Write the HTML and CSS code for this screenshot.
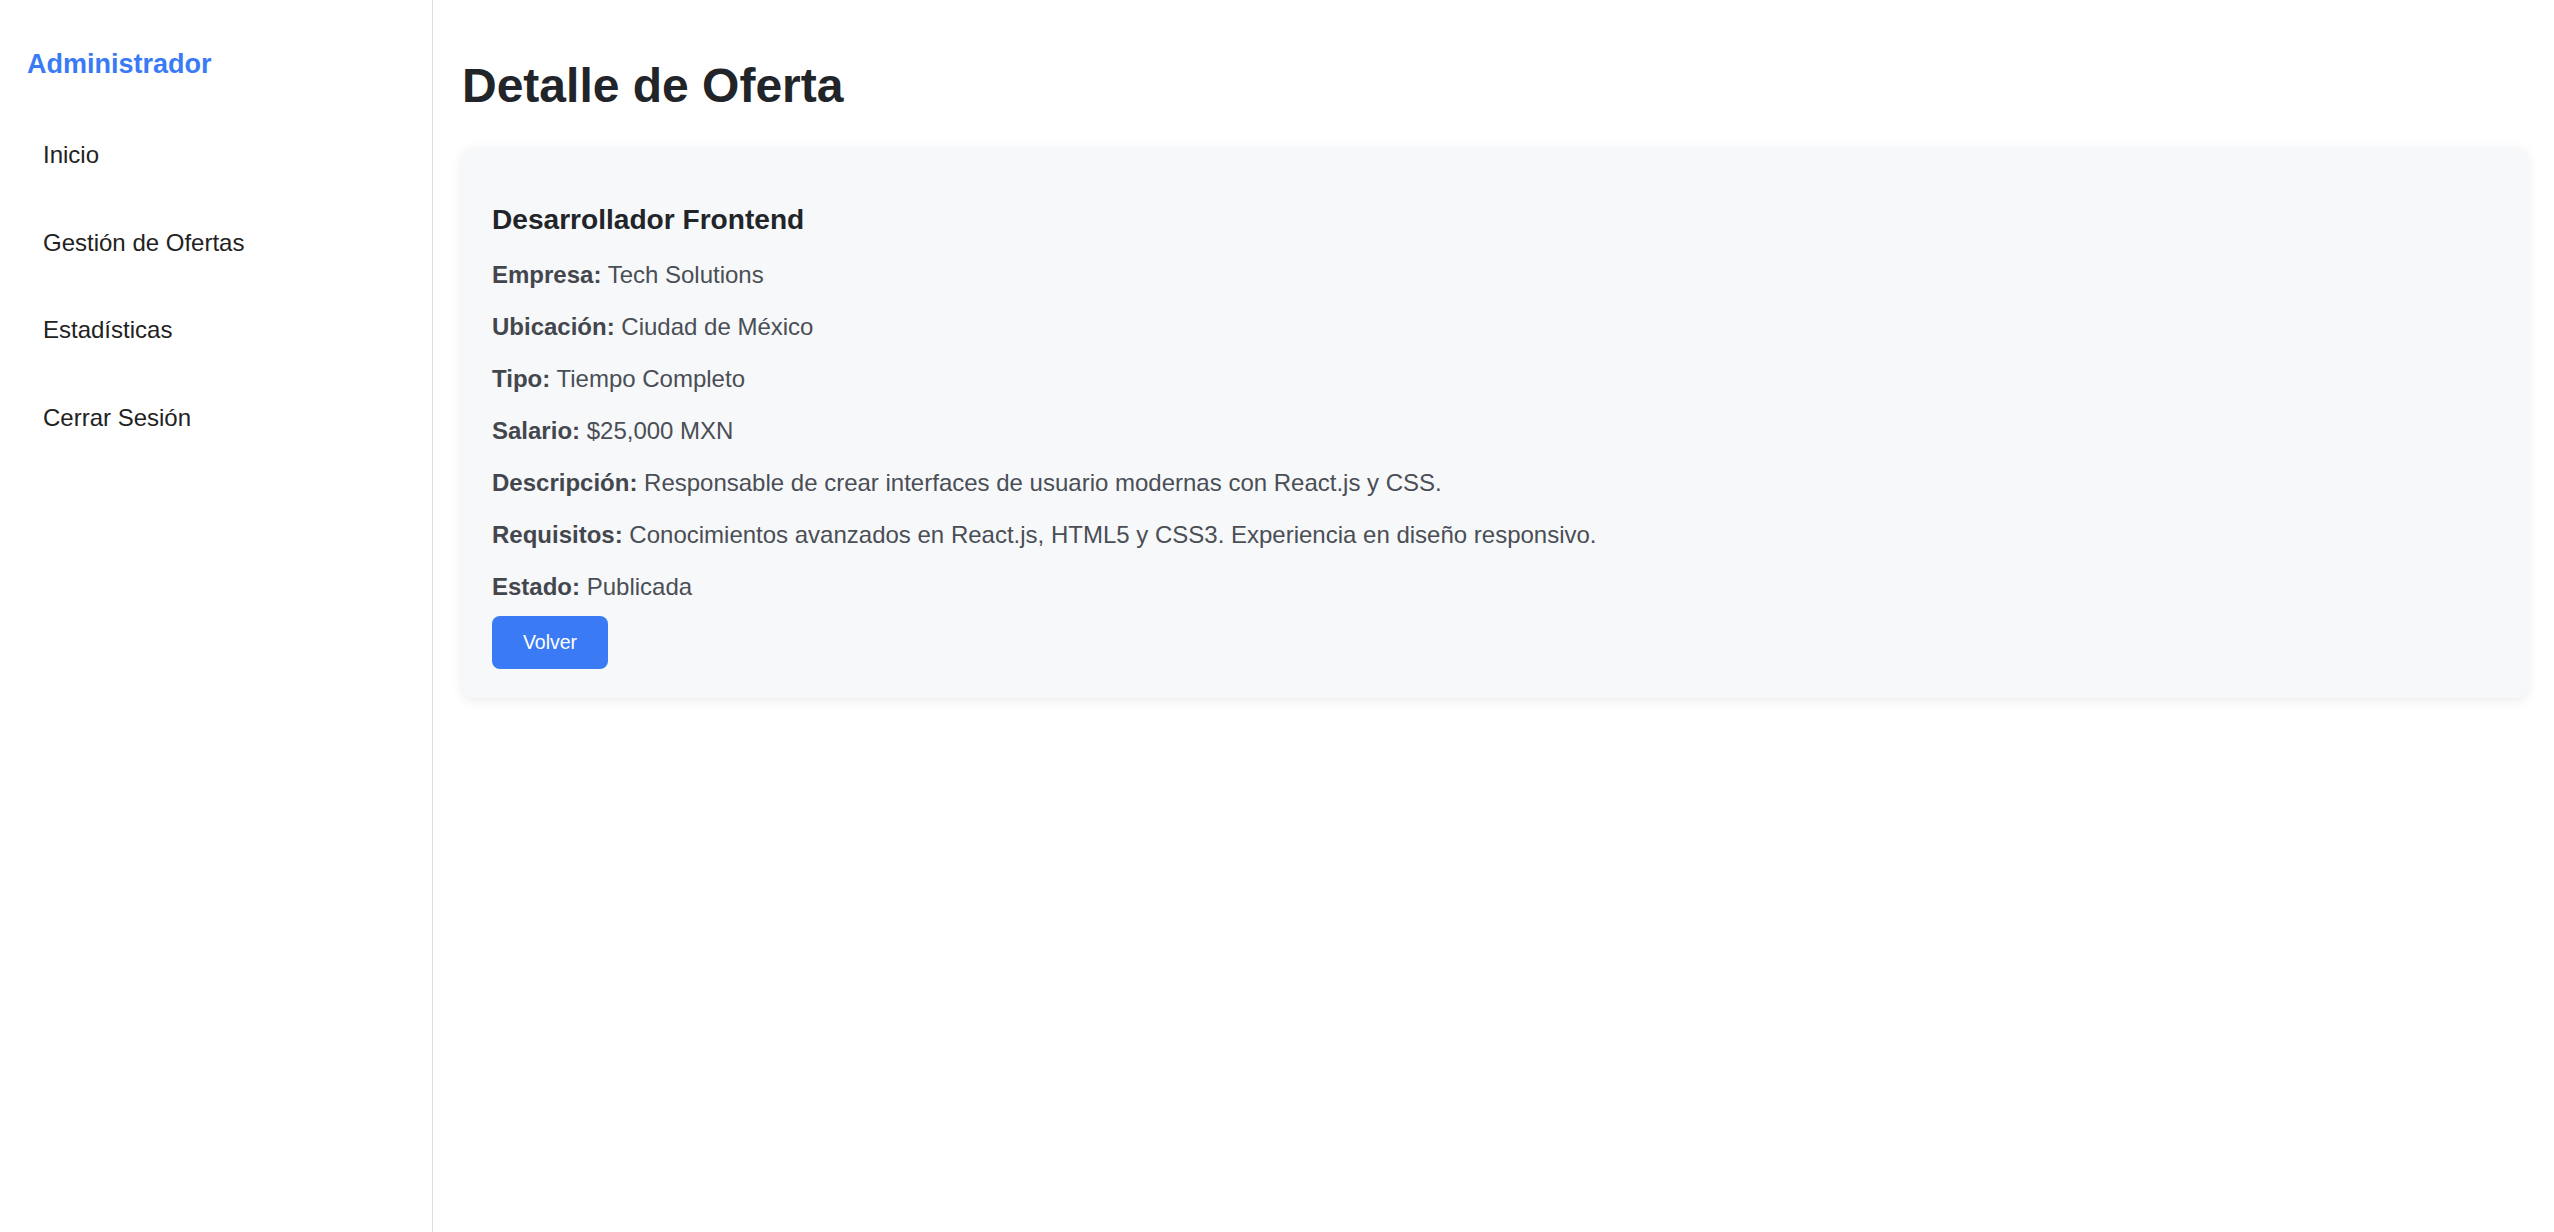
FILE: index.html
```html
<!DOCTYPE html>
<html lang="es">
<head>
<meta charset="utf-8">
<title>Detalle de Oferta</title>
<link rel="stylesheet" href="styles.css">
</head>
<body>
<div class="layout">
  <aside class="sidebar">
    <h2 class="brand">Administrador</h2>
    <nav class="nav">
      <a class="nav-link" href="#">Inicio</a>
      <a class="nav-link" href="#">Gestión de Ofertas</a>
      <a class="nav-link" href="#">Estadísticas</a>
      <a class="nav-link" href="#">Cerrar Sesión</a>
    </nav>
  </aside>
  <main class="main">
    <h1 class="page-title">Detalle de Oferta</h1>
    <section class="card">
      <h3 class="job-title">Desarrollador Frontend</h3>
      <p class="field"><strong>Empresa:</strong> Tech Solutions</p>
      <p class="field"><strong>Ubicación:</strong> Ciudad de México</p>
      <p class="field"><strong>Tipo:</strong> Tiempo Completo</p>
      <p class="field"><strong>Salario:</strong> $25,000 MXN</p>
      <p class="field"><strong>Descripción:</strong> Responsable de crear interfaces de usuario modernas con React.js y CSS.</p>
      <p class="field"><strong>Requisitos:</strong> Conocimientos avanzados en React.js, HTML5 y CSS3. Experiencia en diseño responsivo.</p>
      <p class="field field-last"><strong>Estado:</strong> Publicada</p>
      <button class="btn" type="button">Volver</button>
    </section>
  </main>
</div>
</body>
</html>
```

FILE: styles.css
```css
* { box-sizing: border-box; }

html, body {
  margin: 0;
  padding: 0;
  background: #ffffff;
}

body {
  font-family: "Liberation Sans", Arial, sans-serif;
  color: #212529;
}

.layout {
  display: flex;
  min-height: 1232px;
}

.sidebar {
  width: 433px;
  flex: 0 0 433px;
  border-right: 1px solid #dcdde3;
  padding: 49px 27px 27px;
}

.brand {
  margin: 0;
  font-size: 27px;
  font-weight: bold;
  color: #3a7bf5;
  line-height: 31px;
}

.nav {
  display: flex;
  flex-direction: column;
  gap: 28px;
  margin-top: 45px;
}

.nav-link {
  display: block;
  padding: 16px;
  font-size: 24px;
  line-height: 27.6px;
  color: #222222;
  text-decoration: none;
}

.main {
  flex: 1;
  padding: 0 26px 26px 29px;
}

.page-title {
  margin: 59.3px 0 32.8px;
  font-size: 48px;
  line-height: 54.6px;
  font-weight: bold;
  color: #212529;
}

.card {
  background: #f7f8fa;
  border-radius: 12px;
  box-shadow: 0 3px 12px rgba(0, 0, 0, 0.08);
  padding: 29.5px 30px 29.3px;
}

.job-title {
  margin: 28px 0 25.3px;
  font-size: 28.1px;
  line-height: 32px;
  font-weight: bold;
  color: #212529;
}

.field {
  margin: 0 0 25px;
  font-size: 24px;
  line-height: 27px;
  color: #4a4e55;
}

.field strong {
  color: #43474d;
}

.field-last {
  margin-bottom: 15.3px;
}

.btn {
  display: block;
  width: 116px;
  height: 53px;
  padding: 0;
  border: none;
  border-radius: 8px;
  background: #3a7bf5;
  color: #ffffff;
  font-family: "Liberation Sans", Arial, sans-serif;
  font-size: 19.5px;
  cursor: pointer;
}
```
